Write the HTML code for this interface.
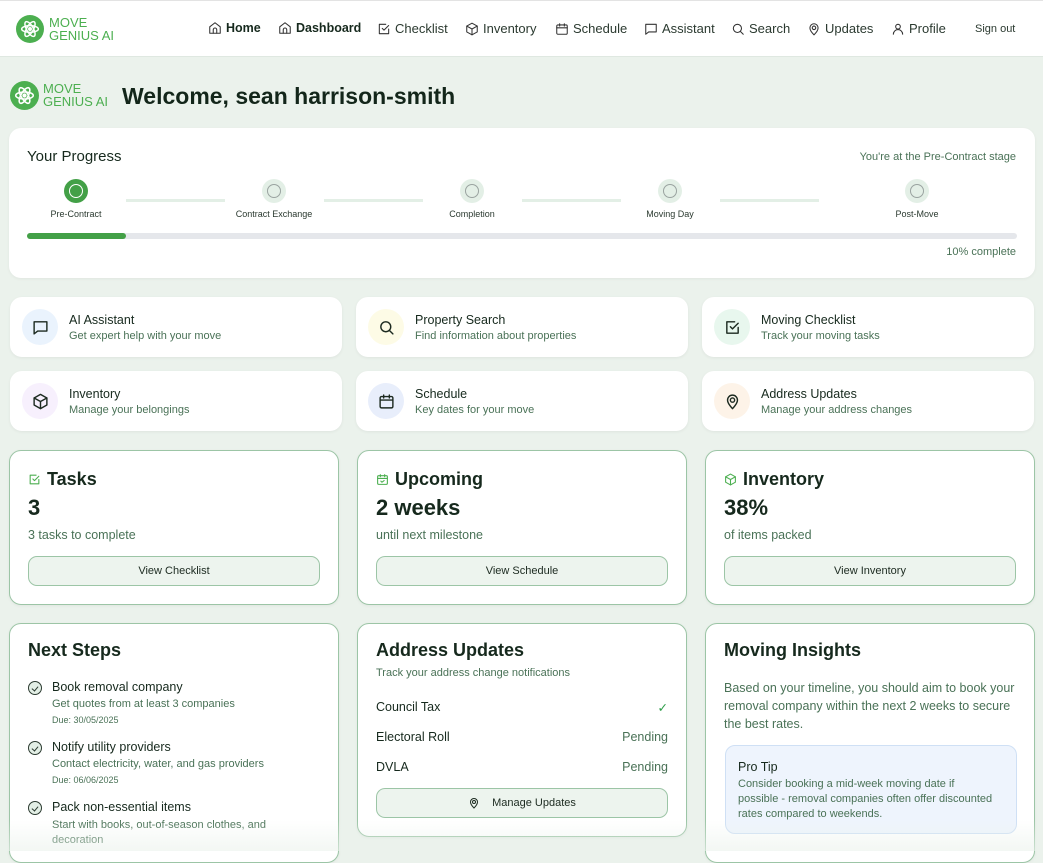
<!DOCTYPE html>
<html><head><meta charset="utf-8">
<style>
*{box-sizing:border-box;margin:0;padding:0}
body{width:1043px;height:851px;overflow:hidden;background:#ebf2ec;font-family:"Liberation Sans",sans-serif;color:#16291d;position:relative}
.a{position:absolute}
.nav{left:0;top:0;width:1043px;height:57px;background:#fff;border-top:1px solid #e3e3e3;border-bottom:1px solid #dfe8e1}
.ni{position:absolute;top:20px;font-size:13px;color:#2b3a30;display:flex;align-items:center;gap:4px;white-space:nowrap}
.ni svg{width:14px;height:14px;fill:none;stroke:#333;stroke-width:1.8;stroke-linecap:round;stroke-linejoin:round}
.logo{border-radius:50%;background:#4caf50;display:flex;align-items:center;justify-content:center}
.lt{color:#4caf50;line-height:1;}
.card{position:absolute;background:#fff;border-radius:12px}
.bc{border:1px solid #9cc5a6;box-shadow:0 1px 3px rgba(0,0,0,.05)}
.ql{height:60px;box-shadow:0 1px 3px rgba(0,0,0,.06)}
.ic{position:absolute;left:12px;top:12px;width:36px;height:36px;border-radius:50%;display:flex;align-items:center;justify-content:center}
.ic svg{width:17px;height:17px;fill:none;stroke:#1c2a20;stroke-width:2;stroke-linecap:round;stroke-linejoin:round}
.qt{position:absolute;left:59px;top:16px;font-size:12.5px;font-weight:500;color:#16291d}
.qs{position:absolute;left:59px;top:33px;font-size:11px;color:#4a7257}
.st{position:absolute;left:18px;top:18px;font-size:18px;font-weight:bold;display:flex;align-items:center;gap:6px}
.st svg{width:13px;height:13px;fill:none;stroke:#4caf50;stroke-width:2;stroke-linecap:round;stroke-linejoin:round}
.sn{position:absolute;left:18px;top:44px;font-size:22px;font-weight:bold}
.ss{position:absolute;left:18px;top:77px;font-size:12.5px;color:#4a7257}
.btn{position:absolute;left:18px;width:292px;height:30px;background:#edf4ee;border:1px solid #9cc5a6;border-radius:9px;font-size:11px;font-weight:500;display:flex;align-items:center;justify-content:center;gap:12px;color:#1c2a20}
.circ{position:absolute;width:24px;height:24px;border-radius:50%;background:#e3efe6;display:flex;align-items:center;justify-content:center}
.circ i{width:14px;height:14px;border-radius:50%;border:1.3px solid #9aa3a0;display:block}
.lbl{position:absolute;font-size:9px;color:#2b3a30;transform:translateX(-50%);white-space:nowrap;top:209px}
.line{position:absolute;top:199px;height:3px;width:99px;background:#e3efe6}
.h2{position:absolute;left:18px;top:16px;font-size:18px;font-weight:bold}
.chk{position:absolute;left:18px;width:14px;height:14px;border-radius:50%;border:1.5px solid #2b3a30;background:#e3efe6}
.chk:after{content:"";position:absolute;left:3.5px;top:2.5px;width:3px;height:5px;border:solid #2b3a30;border-width:0 1.5px 1.5px 0;transform:rotate(40deg)}
.it{position:absolute;left:42px;font-size:12.5px;font-weight:500}
.is{position:absolute;left:42px;font-size:11px;color:#4a7257}
.id{position:absolute;left:42px;font-size:9px;color:#4a7257}
.row{position:absolute;left:18px;right:18px;font-size:12.5px;display:flex;justify-content:space-between}
.row b{font-weight:normal;color:#4a7257}
</style></head><body>

<div class="a nav">
  <div class="a logo" style="left:16px;top:14px;width:28px;height:28px">
    <svg width="20" height="20" viewBox="0 0 24 24" fill="none" stroke="#fff" stroke-width="1.8"><circle cx="12" cy="12" r="1.5" fill="#fff"/><ellipse cx="12" cy="12" rx="10" ry="4"/><ellipse cx="12" cy="12" rx="10" ry="4" transform="rotate(60 12 12)"/><ellipse cx="12" cy="12" rx="10" ry="4" transform="rotate(120 12 12)"/></svg>
  </div>
  <div class="a lt" style="left:49px;top:15px;font-size:13px">MOVE<br>GENIUS AI</div>
  <div class="ni" style="left:208px;font-weight:bold;color:#16291d;font-size:12.5px"><svg viewBox="0 0 24 24"><path d="M3 10l9-7 9 7v11H3z"/><path d="M9 21v-6a3 3 0 016 0v6"/></svg>Home</div>
  <div class="ni" style="left:278px;font-weight:bold;color:#16291d;font-size:12.5px"><svg viewBox="0 0 24 24"><path d="M3 10l9-7 9 7v11H3z"/><path d="M9 21v-6a3 3 0 016 0v6"/></svg>Dashboard</div>
  <div class="ni" style="left:377px"><svg viewBox="0 0 24 24"><path d="M20 12v8H4V4h11"/><path d="M9 11l3 3 8-8"/></svg>Checklist</div>
  <div class="ni" style="left:465px"><svg viewBox="0 0 24 24"><path d="M12 2l9 5v10l-9 5-9-5V7z"/><path d="M3 7l9 5 9-5M12 12v10"/></svg>Inventory</div>
  <div class="ni" style="left:555px"><svg viewBox="0 0 24 24"><rect x="3" y="5" width="18" height="16" rx="2"/><path d="M3 10h18M8 3v4M16 3v4"/></svg>Schedule</div>
  <div class="ni" style="left:644px"><svg viewBox="0 0 24 24"><path d="M3 4h18v13H8l-5 4z"/></svg>Assistant</div>
  <div class="ni" style="left:731px"><svg viewBox="0 0 24 24"><circle cx="11" cy="11" r="7"/><path d="M16 16l5 5"/></svg>Search</div>
  <div class="ni" style="left:807px"><svg viewBox="0 0 24 24"><path d="M12 22s7-7 7-12a7 7 0 00-14 0c0 5 7 12 7 12z"/><circle cx="12" cy="10" r="3"/></svg>Updates</div>
  <div class="ni" style="left:891px"><svg viewBox="0 0 24 24"><circle cx="12" cy="8" r="4"/><path d="M4 21a8 8 0 0116 0"/></svg>Profile</div>
  <div class="ni" style="left:975px;font-size:11px;top:22px">Sign out</div>
</div>

<div class="a logo" style="left:10px;top:81px;width:29px;height:29px">
  <svg width="21" height="21" viewBox="0 0 24 24" fill="none" stroke="#fff" stroke-width="1.8"><circle cx="12" cy="12" r="1.5" fill="#fff"/><ellipse cx="12" cy="12" rx="10" ry="4"/><ellipse cx="12" cy="12" rx="10" ry="4" transform="rotate(60 12 12)"/><ellipse cx="12" cy="12" rx="10" ry="4" transform="rotate(120 12 12)"/></svg>
</div>
<div class="a lt" style="left:43px;top:82px;font-size:13px">MOVE<br>GENIUS AI</div>
<div class="a" style="left:122px;top:83px;font-size:23px;font-weight:bold;color:#13261a">Welcome, sean harrison-smith</div>

<div class="card" style="left:9px;top:128px;width:1026px;height:150px;box-shadow:0 1px 3px rgba(0,0,0,.05)"></div>
<div class="a" style="left:27px;top:148px;font-size:15px;font-weight:500">Your Progress</div>
<div class="a" style="right:27px;top:151px;font-size:11px;color:#4a7257">You're at the Pre-Contract stage</div>
<div class="circ" style="left:64px;top:179px;background:#43a047"><i style="border-color:#fff"></i></div>
<div class="circ" style="left:262px;top:179px"><i></i></div>
<div class="circ" style="left:460px;top:179px"><i></i></div>
<div class="circ" style="left:658px;top:179px"><i></i></div>
<div class="circ" style="left:905px;top:179px"><i></i></div>
<div class="line" style="left:126px"></div><div class="line" style="left:324px"></div><div class="line" style="left:522px"></div><div class="line" style="left:720px"></div>
<div class="lbl" style="left:76px">Pre-Contract</div>
<div class="lbl" style="left:274px">Contract Exchange</div>
<div class="lbl" style="left:472px">Completion</div>
<div class="lbl" style="left:670px">Moving Day</div>
<div class="lbl" style="left:917px">Post-Move</div>
<div class="a" style="left:27px;top:233px;width:990px;height:6px;border-radius:3px;background:#e5e7eb"><div style="width:99px;height:6px;border-radius:3px;background:#43a047"></div></div>
<div class="a" style="right:27px;top:246px;font-size:11px;color:#4a7257">10% complete</div>

<div class="card ql" style="left:10px;top:297px;width:332px"><div class="ic" style="background:#eaf3fd"><svg viewBox="0 0 24 24"><path d="M3 4h18v13H8l-5 4z"/></svg></div><div class="qt">AI Assistant</div><div class="qs">Get expert help with your move</div></div>
<div class="card ql" style="left:356px;top:297px;width:332px"><div class="ic" style="background:#fdfbe6"><svg viewBox="0 0 24 24"><circle cx="11" cy="11" r="7"/><path d="M16 16l5 5"/></svg></div><div class="qt">Property Search</div><div class="qs">Find information about properties</div></div>
<div class="card ql" style="left:702px;top:297px;width:332px"><div class="ic" style="background:#e8f7ee"><svg viewBox="0 0 24 24"><path d="M20 12v8H4V4h11"/><path d="M9 11l3 3 8-8"/></svg></div><div class="qt">Moving Checklist</div><div class="qs">Track your moving tasks</div></div>
<div class="card ql" style="left:10px;top:371px;width:332px"><div class="ic" style="background:#f7f0fd"><svg viewBox="0 0 24 24"><path d="M12 2l9 5v10l-9 5-9-5V7z"/><path d="M3 7l9 5 9-5M12 12v10"/></svg></div><div class="qt">Inventory</div><div class="qs">Manage your belongings</div></div>
<div class="card ql" style="left:356px;top:371px;width:332px"><div class="ic" style="background:#e8eefb"><svg viewBox="0 0 24 24"><rect x="3" y="5" width="18" height="16" rx="2"/><path d="M3 10h18M8 3v4M16 3v4"/></svg></div><div class="qt">Schedule</div><div class="qs">Key dates for your move</div></div>
<div class="card ql" style="left:702px;top:371px;width:332px"><div class="ic" style="background:#fdf3e8"><svg viewBox="0 0 24 24"><path d="M12 22s7-7 7-12a7 7 0 00-14 0c0 5 7 12 7 12z"/><circle cx="12" cy="10" r="3"/></svg></div><div class="qt">Address Updates</div><div class="qs">Manage your address changes</div></div>

<div class="card bc" style="left:9px;top:450px;width:330px;height:155px">
  <div class="st"><svg viewBox="0 0 24 24"><path d="M20 12v8H4V4h11"/><path d="M9 11l3 3 8-8"/></svg>Tasks</div><div class="sn">3</div><div class="ss">3 tasks to complete</div><div class="btn" style="top:105px">View Checklist</div></div>
<div class="card bc" style="left:357px;top:450px;width:330px;height:155px">
  <div class="st"><svg viewBox="0 0 24 24"><rect x="3" y="5" width="18" height="16" rx="2"/><path d="M3 10h18M8 3v4M16 3v4M9 15l2 2 4-3"/></svg>Upcoming</div><div class="sn">2 weeks</div><div class="ss">until next milestone</div><div class="btn" style="top:105px">View Schedule</div></div>
<div class="card bc" style="left:705px;top:450px;width:330px;height:155px">
  <div class="st"><svg viewBox="0 0 24 24"><path d="M12 2l9 5v10l-9 5-9-5V7z"/><path d="M3 7l9 5 9-5M12 12v10"/></svg>Inventory</div><div class="sn">38%</div><div class="ss">of items packed</div><div class="btn" style="top:105px">View Inventory</div></div>

<div class="card bc" style="left:9px;top:623px;width:330px;height:240px">
  <div class="h2">Next Steps</div>
  <div class="chk" style="top:57px"></div><div class="it" style="top:56px">Book removal company</div><div class="is" style="top:74px">Get quotes from at least 3 companies</div><div class="id" style="top:91px">Due: 30/05/2025</div>
  <div class="chk" style="top:117px"></div><div class="it" style="top:116px">Notify utility providers</div><div class="is" style="top:134px">Contact electricity, water, and gas providers</div><div class="id" style="top:151px">Due: 06/06/2025</div>
  <div class="chk" style="top:177px"></div><div class="it" style="top:176px">Pack non-essential items</div><div class="is" style="top:194px;line-height:15px;width:260px">Start with books, out-of-season clothes, and decoration</div>
</div>
<div class="card bc" style="left:357px;top:623px;width:330px;height:214px">
  <div class="h2">Address Updates</div>
  <div class="a" style="left:18px;top:43px;font-size:11px;color:#4a7257">Track your address change notifications</div>
  <div class="row" style="top:76px"><span>Council Tax</span><b style="color:#2e9e4a">✓</b></div>
  <div class="row" style="top:106px"><span>Electoral Roll</span><b>Pending</b></div>
  <div class="row" style="top:136px"><span>DVLA</span><b>Pending</b></div>
  <div class="btn" style="top:164px"><svg width="12" height="12" viewBox="0 0 24 24" fill="none" stroke="#1c2a20" stroke-width="2"><path d="M12 22s7-7 7-12a7 7 0 00-14 0c0 5 7 12 7 12z"/><circle cx="12" cy="10" r="3"/></svg>Manage Updates</div>
</div>
<div class="card bc" style="left:705px;top:623px;width:330px;height:240px">
  <div class="h2">Moving Insights</div>
  <div class="a" style="left:18px;top:55px;width:295px;font-size:12.5px;line-height:18px;color:#4a7257">Based on your timeline, you should aim to book your removal company within the next 2 weeks to secure the best rates.</div>
  <div class="a" style="left:19px;top:121px;width:292px;height:89px;background:#eef4fd;border:1px solid #cfe0f5;border-radius:10px">
    <div class="a" style="left:12px;top:14px;font-size:12.5px;font-weight:500">Pro Tip</div>
    <div class="a" style="left:12px;top:31px;width:278px;font-size:11px;line-height:15px;color:#4a7257;white-space:nowrap">Consider booking a mid-week moving date if<br>possible - removal companies often offer discounted<br>rates compared to weekends.</div>
  </div>
</div>
<div class="a" style="left:0;top:820px;width:1043px;height:31px;background:linear-gradient(rgba(235,242,236,0),rgba(235,242,236,.6))"></div>
</body></html>
